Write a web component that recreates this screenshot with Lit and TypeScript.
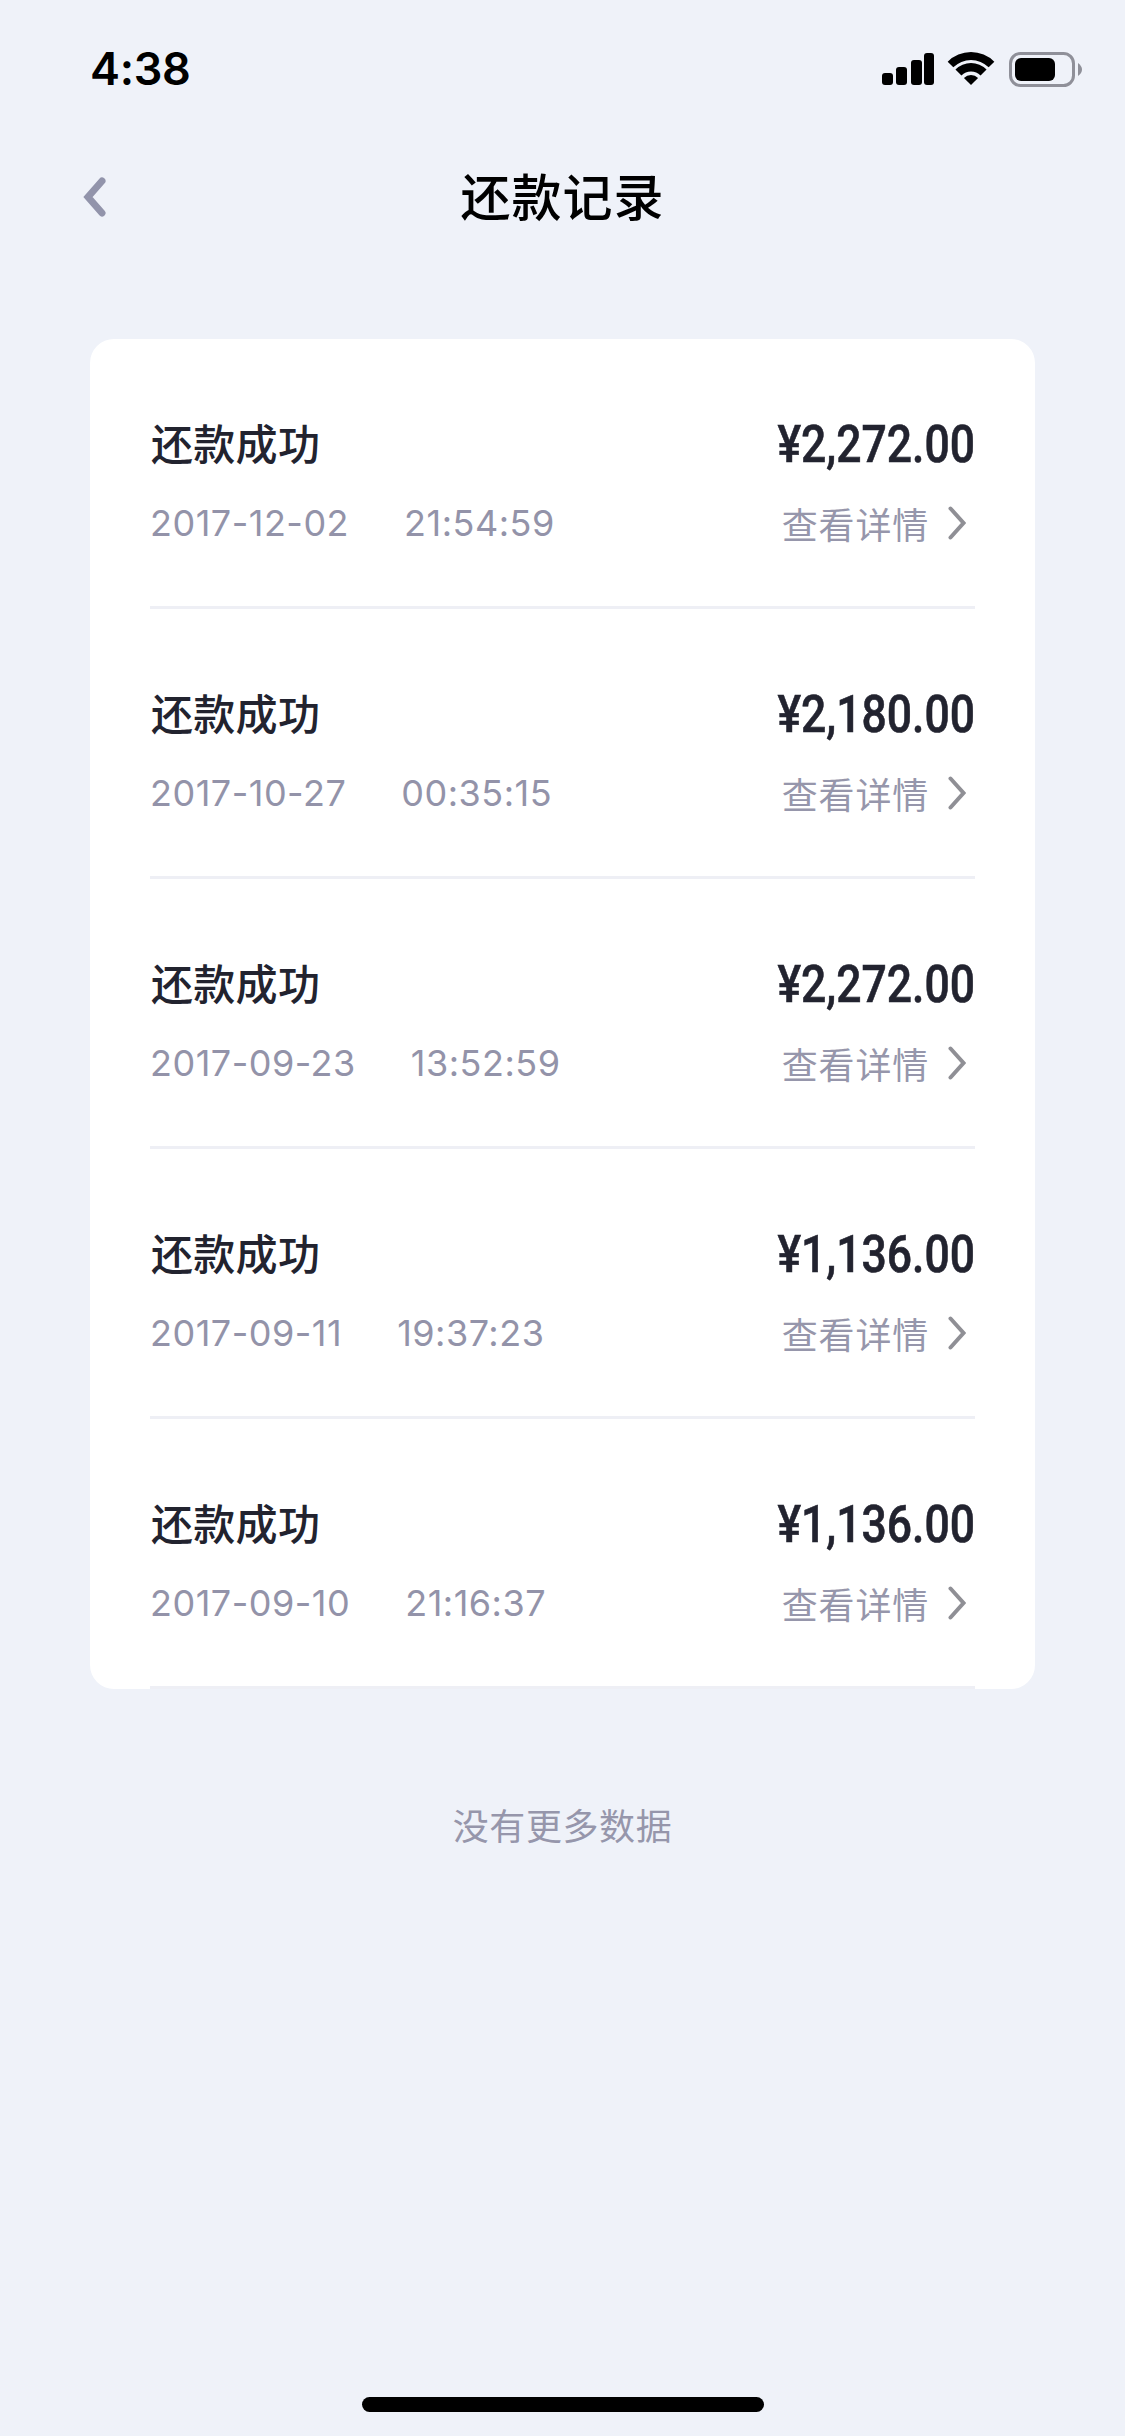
import { LitElement, html, css } from "lit";
import { customElement } from "lit/decorators.js";

const rows = [
  { date: "2017-12-02", time: "21:54:59", amount: "¥2,272.00" },
  { date: "2017-10-27", time: "00:35:15", amount: "¥2,180.00" },
  { date: "2017-09-23", time: "13:52:59", amount: "¥2,272.00" },
  { date: "2017-09-11", time: "19:37:23", amount: "¥1,136.00" },
  { date: "2017-09-10", time: "21:16:37", amount: "¥1,136.00" },
];

@customElement("app-root")
export class AppRoot extends LitElement {
  static styles = css`
    :host {
      display: flex;
      flex-direction: column;
      width: 1125px;
      height: 2436px;
      background: #eff2f9;
      overflow: hidden;
      font-family: "Noto Sans CJK SC", "Inter", sans-serif;
    }
    .status {
      height: 138px;
      box-sizing: border-box;
      padding: 45px 43px 0 90px;
      display: flex;
      justify-content: space-between;
      align-items: flex-start;
    }
    .clock {
      font: 600 45px/48px "Inter", sans-serif;
      color: #000;
      letter-spacing: -0.3px;
    }
    .sys {
      display: block;
      margin-top: 7px;
    }
    .nav {
      height: 118px;
      position: relative;
      display: flex;
      align-items: center;
      justify-content: center;
    }
    .back {
      position: absolute;
      left: 81px;
      top: 39px;
    }
    .title {
      font-size: 50px;
      line-height: 60px;
      font-weight: 500;
      color: #000;
      letter-spacing: 1px;
      margin-top: -6px;
    }
    .card {
      margin: 83px 90px 0;
      height: 1350px;
      background: #fff;
      border-radius: 24px;
      padding: 0 60px;
      overflow: hidden;
    }
    .row {
      height: 270px;
      box-sizing: border-box;
      border-bottom: 3px solid #eeeff5;
      padding: 68px 0 0 1px;
      display: grid;
      grid-template-columns: 1fr 240px;
      grid-template-rows: 70px 92px;
      align-items: center;
    }
    .state {
      font-size: 42px;
      line-height: 70px;
      font-weight: 500;
      color: #22232f;
      letter-spacing: 0.3px;
    }
    .amount {
      font: 500 52px/70px "Roboto", sans-serif;
      color: #22232f;
      text-align: right;
      white-space: nowrap;
      margin-top: 6px;
      transform: scaleX(0.855);
      transform-origin: right center;
      -webkit-text-stroke: 0.6px #22232f;
    }
    .stamp {
      display: flex;
      gap: 55px;
      margin-left: -1px;
      font: 400 36px/92px "Inter", sans-serif;
      color: #9393a9;
      letter-spacing: 0.5px;
    }
    .detail {
      display: flex;
      justify-content: flex-end;
      align-items: center;
      gap: 19px;
      padding-right: 9px;
      font-size: 36px;
      line-height: 90px;
      color: #9696ab;
      letter-spacing: 0.8px;
    }
    .detail svg {
      display: block;
    }
    .none {
      margin-top: 109px;
      text-align: center;
      font-size: 36px;
      line-height: 52px;
      color: #9696ab;
      letter-spacing: 0.6px;
    }
    .spacer {
      flex: 1;
    }
    .home {
      align-self: center;
      width: 402px;
      height: 15px;
      margin-bottom: 24px;
      border-radius: 8px;
      background: #000;
    }
  `;

  render() {
    return html`
      <div class="status">
        <div class="clock">4:38</div>
        <svg class="sys" width="200" height="36" viewBox="0 0 200 36">
          <rect x="0" y="21" width="11" height="12" rx="3" fill="#000" />
          <rect x="14" y="15" width="11" height="18" rx="3" fill="#000" />
          <rect x="29" y="8" width="11" height="25" rx="3" fill="#000" />
          <rect x="42" y="1" width="10" height="32" rx="3" fill="#000" />
          <path d="M65.67 9.67 A33 33 0 0 1 112.33 9.67 L106.68 15.32 A25 25 0 0 0 71.32 15.32 Z" fill="#000" />
          <path d="M73.44 17.44 A22 22 0 0 1 104.56 17.44 L98.55 23.45 A13.5 13.5 0 0 0 79.45 23.45 Z" fill="#000" />
          <path d="M81.93 25.93 A10 10 0 0 1 96.07 25.93 L89 33 Z" fill="#000" />
          <rect x="128.5" y="1.5" width="63" height="32" rx="10" fill="none" stroke="#8f9099" stroke-width="3" />
          <rect x="133" y="6" width="40" height="23" rx="6" fill="#000" />
          <path d="M196 11 Q200 14 200 17.5 Q200 21 196 24 Z" fill="#8f9099" />
        </svg>
      </div>
      <div class="nav">
        <svg class="back" width="26" height="40" viewBox="0 0 26 40">
          <path d="M21 4 L7 20 L21 36" fill="none" stroke="#9294ab" stroke-width="7" stroke-linecap="round" stroke-linejoin="miter" />
        </svg>
        <div class="title">还款记录</div>
      </div>
      <div class="card">
        ${rows.map(
          (r) => html`
            <div class="row">
              <div class="state">还款成功</div>
              <div class="amount">${r.amount}</div>
              <div class="stamp"><span>${r.date}</span><span>${r.time}</span></div>
              <div class="detail">
                查看详情
                <svg width="18" height="34" viewBox="0 0 18 34">
                  <path d="M2.5 2.5 L15.5 17 L2.5 31.5" fill="none" stroke="#8f8f95" stroke-width="4" stroke-linecap="round" />
                </svg>
              </div>
            </div>
          `
        )}
      </div>
      <div class="none">没有更多数据</div>
      <div class="spacer"></div>
      <div class="home"></div>
    `;
  }
}
